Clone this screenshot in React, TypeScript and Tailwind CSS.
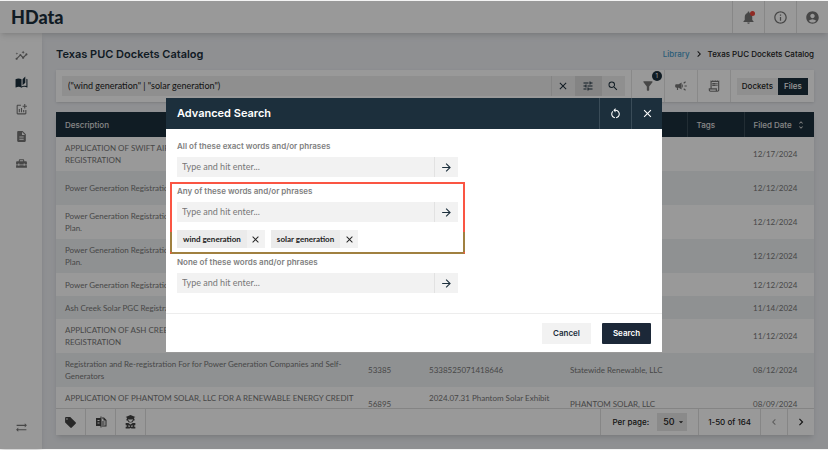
import type { ReactNode } from "react";
import {
  MdAccountCircle,
  MdArrowDropDown,
  MdArrowForward,
  MdAutoStories,
  MdCampaign,
  MdChevronLeft,
  MdChevronRight,
  MdClose,
  MdDescription,
  MdFilterAlt,
  MdHomeRepairService,
  MdInfoOutline,
  MdInsights,
  MdLocalOffer,
  MdNotifications,
  MdOutlineAddchart,
  MdOutlineReceiptLong,
  MdRestartAlt,
  MdSearch,
  MdSyncAlt,
  MdTune,
  MdUnfoldMore,
} from "react-icons/md";
import clsx from "clsx";

type Row = {
  description: string[];
  docket?: string;
  file?: string[];
  filer?: string;
  date: string;
  short?: boolean;
};

const rows: Row[] = [
  { description: ["APPLICATION OF SWIFT AIR SOLAR", "REGISTRATION"], date: "12/17/2024" },
  { description: ["Power Generation Registration"], date: "12/12/2024" },
  { description: ["Power Generation Registration", "Plan."], date: "12/12/2024" },
  { description: ["Power Generation Registration", "Plan."], date: "12/12/2024" },
  { description: ["Power Generation Registration"], date: "12/12/2024", short: true },
  { description: ["Ash Creek Solar PGC Registration"], date: "11/14/2024", short: true },
  { description: ["APPLICATION OF ASH CREEK SOLAR", "REGISTRATION"], date: "11/12/2024" },
  {
    description: [
      "Registration and Re-registration For for Power Generation Companies and Self-",
      "Generators",
    ],
    docket: "53385",
    file: ["5338525071418646"],
    filer: "Statewide Renewable, LLC",
    date: "08/12/2024",
  },
  {
    description: ["APPLICATION OF PHANTOM SOLAR, LLC FOR A RENEWABLE ENERGY CREDIT", "\u00a0"],
    docket: "56895",
    file: ["2024.07.31 Phantom Solar Exhibit", "\u00a0"],
    filer: "PHANTOM SOLAR, LLC",
    date: "08/09/2024",
  },
];

const navItems = [
  { label: "Insights", icon: <MdInsights /> },
  { label: "Library", icon: <MdAutoStories />, active: true },
  { label: "Charts", icon: <MdOutlineAddchart /> },
  { label: "Documents", icon: <MdDescription /> },
  { label: "Toolbox", icon: <MdHomeRepairService /> },
];

function CompareIcon() {
  return (
    <svg viewBox="0 0 24 24" className="size-3" fill="currentColor" aria-hidden>
      <path d="M2 4h9V1h2v22h-2v-3H2zM5 8v2h4V8zm0 5v2h4v-2z" />
      <path d="M14 3h4l5 5v13h-9v-2h7V9h-4V5h-3zM14 11h5v2h-5zM14 15h5v2h-5z" />
    </svg>
  );
}

function ReaderIcon() {
  return (
    <svg viewBox="0 0 24 26" className="h-[14px] w-[13px]" fill="currentColor" aria-hidden>
      <path d="M12 0l9 3.500-2.500 1.500v2h1V10h-1.800a6 6 0 0 1-11.400 0H4.500V7h1V5L3 3.500zM8 7.500v1.300a4 4 0 0 0 8 0V7.500l-2 1h-4z" />
      <path d="M3 15h5l4 2.500L16 15h5v4h-2v3h2v3h-7l-2-1-2 1H3v-3h2v-3H3zM8 19v3h3v-2zM16 19l-3 1v2h3z" fillRule="evenodd" />
    </svg>
  );
}

function HeaderButton({ label, children }: { label: string; children: ReactNode }) {
  return (
    <button
      type="button"
      aria-label={label}
      className="relative flex w-8 items-center justify-center border-l border-[#e2e2e2] text-[15px] text-[#777]"
    >
      {children}
    </button>
  );
}

function TopBar() {
  return (
    <header className="relative z-10 flex h-8 shrink-0 justify-between bg-white shadow-md">
      <a href="#" className="flex items-center pl-[11px] font-[Lato] text-lg font-black text-[#1c2f3c]">
        HData
      </a>
      <div className="flex">
        <HeaderButton label="Notifications">
          <MdNotifications />
          <span className="absolute top-[10px] right-[9px] size-[5px] rounded-full bg-[#f0483e]" />
        </HeaderButton>
        <HeaderButton label="Information">
          <MdInfoOutline />
        </HeaderButton>
        <HeaderButton label="Account">
          <MdAccountCircle />
        </HeaderButton>
      </div>
    </header>
  );
}

function SideNav() {
  return (
    <nav className="flex w-[42px] shrink-0 flex-col items-center justify-between bg-white pt-4 pb-[15px] text-[13px] text-[#777] shadow-md">
      <ul className="flex flex-col items-center gap-[14px]">
        {navItems.map((item) => (
          <li key={item.label}>
            <a
              href="#"
              aria-label={item.label}
              className={clsx("block", item.active && "text-[#1c2f3c]")}
            >
              {item.icon}
            </a>
          </li>
        ))}
      </ul>
      <button type="button" aria-label="Switch">
        <MdSyncAlt />
      </button>
    </nav>
  );
}

function ToolButton({ label, badge, children }: { label: string; badge?: string; children: ReactNode }) {
  return (
    <button
      type="button"
      aria-label={label}
      className="relative flex w-[33px] items-center justify-center border-l border-[#e4e4e4] text-sm text-[#777]"
    >
      {children}
      {badge ? (
        <span className="absolute top-px right-[2px] flex size-[10px] items-center justify-center rounded-full bg-[#1c2f3c] text-[6px] text-white">
          {badge}
        </span>
      ) : null}
    </button>
  );
}

function Toolbar() {
  return (
    <div className="mt-[7px] flex h-8 shrink-0 bg-white shadow-sm">
      <form className="my-auto mr-[6px] ml-[6px] flex h-5 flex-1 bg-[#eee] text-[#1c2f3c]">
        <input
          aria-label="Search query"
          defaultValue={'("wind generation" | "solar generation")'}
          className="min-w-0 flex-1 px-[6px] font-[Lato] text-[9px] text-[#222] outline-none"
        />
        <button type="button" aria-label="Clear" className="flex w-6 items-center justify-center border-l border-[#ddd] text-xs">
          <MdClose />
        </button>
        <button type="button" aria-label="Advanced search" className="flex w-[27px] items-center justify-center bg-[#ddd] text-xs">
          <MdTune />
        </button>
        <button type="submit" aria-label="Search" className="flex w-[23px] items-center justify-center text-xs">
          <MdSearch />
        </button>
      </form>
      <ToolButton label="Filter" badge="1">
        <MdFilterAlt />
      </ToolButton>
      <ToolButton label="Announcements">
        <MdCampaign />
      </ToolButton>
      <ToolButton label="Receipts">
        <MdOutlineReceiptLong />
      </ToolButton>
      <div className="flex items-center border-l border-[#e4e4e4] px-[6px] text-[8px] font-medium">
        <button type="button" className="h-[17px] bg-[#eee] px-[5px] text-[#222]">
          Dockets
        </button>
        <button type="button" className="h-[17px] w-[30px] bg-[#1c2f3c] text-white">
          Files
        </button>
      </div>
    </div>
  );
}

function DocketTable() {
  return (
    <div className="min-h-0 flex-1 overflow-hidden bg-white">
      <table className="w-full table-fixed border-collapse text-left text-[8px] leading-3 text-[#777]">
        <colgroup>
          <col />
          <col className="w-[61px]" />
          <col className="w-[141px]" />
          <col className="w-[126px]" />
          <col className="w-[57px]" />
          <col className="w-[70px]" />
        </colgroup>
        <thead>
          <tr className="h-[25px] bg-[#1c2f3c] text-[#e0e0e0]">
            <th className="px-[9px] font-medium">Description</th>
            <th aria-label="Docket" />
            <th aria-label="File" />
            <th aria-label="Filer" />
            <th className="border-l border-[#3a4c58] px-[9px] font-medium">Tags</th>
            <th className="border-l border-[#3a4c58] pl-[9px] font-medium">
              <span className="flex items-center gap-1 whitespace-nowrap">
                Filed Date
                <MdUnfoldMore className="size-[10px]" />
              </span>
            </th>
          </tr>
        </thead>
        <tbody className="font-[Lato]">
          {rows.map((row, i) => (
            <tr
              key={i}
              className={clsx(row.short ? "h-[23px]" : "h-[34px]", i % 2 === 1 && "bg-[#eff2f4]")}
            >
              <td className="px-[9px] whitespace-nowrap">
                {row.description.map((line) => (
                  <div key={line}>{line}</div>
                ))}
              </td>
              <td className="pl-[9px]">{row.docket}</td>
              <td className="pl-[9px] whitespace-nowrap">
                {row.file?.map((line) => (
                  <div key={line}>{line}</div>
                ))}
              </td>
              <td className="pl-[9px] whitespace-nowrap">{row.filer}</td>
              <td />
              <td className="pl-[9px]">{row.date}</td>
            </tr>
          ))}
        </tbody>
      </table>
    </div>
  );
}

function TableFooter() {
  const action = "flex w-[30px] items-center justify-center border-r border-[#e0e0e0] text-[13px] text-[#444]";
  return (
    <footer className="flex h-[27px] shrink-0 justify-between border-t border-[#ddd] bg-white text-[8px] font-medium text-[#222]">
      <div className="flex">
        <button type="button" aria-label="Tag" className={action}>
          <MdLocalOffer />
        </button>
        <button type="button" aria-label="Compare" className={action}>
          <CompareIcon />
        </button>
        <button type="button" aria-label="Read" className={action}>
          <ReaderIcon />
        </button>
      </div>
      <div className="flex">
        <div className="flex items-center gap-2 border-l border-[#e0e0e0] px-[11px]">
          <label htmlFor="per-page">Per page:</label>
          <div className="relative">
            <select
              id="per-page"
              defaultValue="50"
              className="h-[18px] w-[30px] appearance-none bg-[#e6e6e6] pl-[6px] text-[9px] outline-none"
            >
              <option>25</option>
              <option>50</option>
              <option>100</option>
            </select>
            <MdArrowDropDown className="pointer-events-none absolute top-1 right-px size-[10px]" />
          </div>
        </div>
        <div className="flex items-center border-l border-[#e0e0e0] px-[9px]">1-50 of 164</div>
        <button type="button" aria-label="Previous page" className="flex w-[27px] items-center justify-center border-l border-[#e0e0e0] text-xs text-[#999]">
          <MdChevronLeft />
        </button>
        <button type="button" aria-label="Next page" className="flex w-[27px] items-center justify-center border-l border-[#e0e0e0] text-sm">
          <MdChevronRight />
        </button>
      </div>
    </footer>
  );
}

function KeywordField({ id, label, children }: { id: string; label: string; children?: ReactNode }) {
  return (
    <div className="flex flex-col items-start">
      <label htmlFor={id} className="text-[8px] leading-[14px] font-semibold text-[#808080]">
        {label}
      </label>
      <div className="mt-1 flex h-5 w-[281px] bg-[#f2f2f2]">
        <input
          id={id}
          placeholder="Type and hit enter..."
          className="min-w-0 flex-1 px-[5px] font-[Lato] text-[9px] outline-none placeholder:text-[#777]"
        />
        <button
          type="button"
          aria-label={`Add to ${label}`}
          className="flex w-6 items-center justify-center border-l border-[#e2e2e2] text-[13px] text-[#1c2f3c]"
        >
          <MdArrowForward />
        </button>
      </div>
      {children}
    </div>
  );
}

function Chip({ text }: { text: string }) {
  return (
    <li className="flex h-[18px] bg-[#f2f2f2] text-[#222]">
      <span className="flex items-center bg-[#ebebeb] px-[6px] font-[Lato] text-[8px] font-bold">{text}</span>
      <button
        type="button"
        aria-label={`Remove ${text}`}
        className="flex w-[18px] items-center justify-center text-[11px]"
      >
        <MdClose />
      </button>
    </li>
  );
}

function AdvancedSearch() {
  return (
    <div role="dialog" aria-labelledby="dialog-title" className="w-full max-w-[496px] bg-white">
      <div className="flex h-[31px] bg-[#1c2f3c] text-white">
        <h2 id="dialog-title" className="flex flex-1 items-center pl-[11px] text-[11px] font-semibold">
          Advanced Search
        </h2>
        <button type="button" aria-label="Reset" className="flex w-8 items-center justify-center border-l border-[#3a4c58] text-[13px]">
          <MdRestartAlt />
        </button>
        <button type="button" aria-label="Close" className="flex w-[31px] items-center justify-center border-l border-[#3a4c58] text-[13px]">
          <MdClose />
        </button>
      </div>
      <div className="flex flex-col gap-[7px] px-[11px] pt-[10px] pb-5">
        <KeywordField id="all-words" label="All of these exact words and/or phrases" />
        <div className="relative">
          <KeywordField id="any-words" label="Any of these words and/or phrases">
            <ul className="mt-2 flex gap-[6px]">
              <Chip text="wind generation" />
              <Chip text="solar generation" />
            </ul>
          </KeywordField>
          {/* callout around the "any" group */}
          <div className="pointer-events-none absolute -top-[2px] -bottom-[6px] -left-[7px] w-[295px] border-2 border-[#fa5543] border-b-[#a08040]">
            <span className="absolute -right-[2px] bottom-0 h-5 w-[2px] bg-[#a08040]" />
            <span className="absolute bottom-0 -left-[2px] h-5 w-[2px] bg-[#a08040]" />
          </div>
        </div>
        <KeywordField id="none-words" label="None of these words and/or phrases" />
      </div>
      <div className="flex h-[39px] items-center justify-end gap-[11px] border-t border-[#ededed] pr-[11px] text-[8px] font-semibold">
        <button type="button" className="h-[21px] w-[49px] bg-[#f2f2f2] text-[#1c2f3c]">
          Cancel
        </button>
        <button type="button" className="h-[21px] w-[49px] rounded-[1px] bg-[#1c2838] text-white">
          Search
        </button>
      </div>
    </div>
  );
}

export default function App() {
  return (
    <div className="relative h-screen bg-[#f4f4f4] py-px font-['Inter','Noto_Sans',sans-serif]">
      <div className="flex h-full flex-col bg-[#eef0f4]">
        <TopBar />
        <div className="flex min-h-0 flex-1">
          <SideNav />
          <main className="flex min-w-0 flex-1 flex-col px-[14px] pt-3 pb-[14px]">
            <div className="flex h-[18px] items-center justify-between">
              <h1 className="text-[11px] font-semibold text-[#1c2f3c]">Texas PUC Dockets Catalog</h1>
              <div className="flex items-center gap-[3px] text-[8px] font-medium text-[#222]">
                <a href="#" className="text-[#4a9cc9]">
                  Library
                </a>
                <MdChevronRight className="size-3" />
                <span>Texas PUC Dockets Catalog</span>
              </div>
            </div>
            <Toolbar />
            <div className="mt-[10px] flex min-h-0 flex-1 flex-col shadow-md">
              <DocketTable />
              <TableFooter />
            </div>
          </main>
        </div>
      </div>
      <div className="absolute inset-x-0 inset-y-px z-20 flex items-center justify-center bg-black/40">
        <AdvancedSearch />
      </div>
    </div>
  );
}
